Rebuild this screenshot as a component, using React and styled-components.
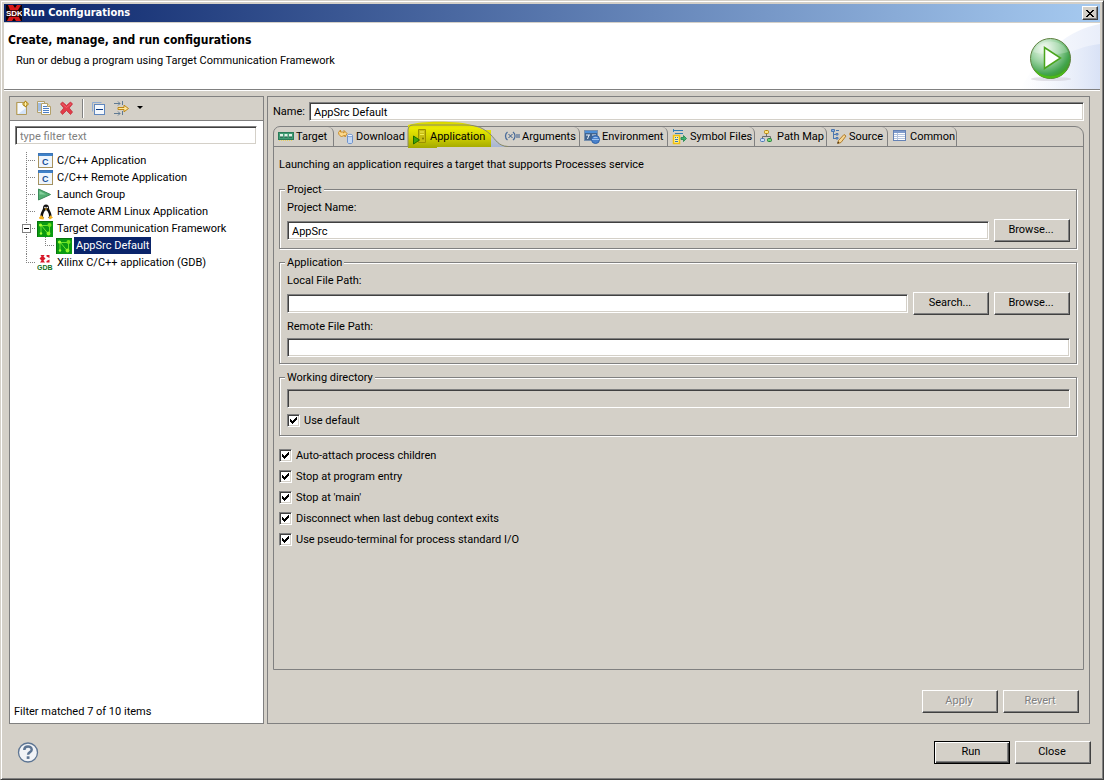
import React, { useState } from "react";
import styled, { createGlobalStyle, css } from "styled-components";

const face = "#d4d0c8";
const shadow = "#808080";
const dark = "#404040";
const headingFont = '"DejaVu Sans Condensed", Tahoma, sans-serif';

const GlobalStyle = createGlobalStyle`
  *, *::before, *::after { box-sizing: border-box; }
  body { margin: 0; background: ${face}; }
  body, button, input {
    font-family: Roboto, Tahoma, sans-serif;
    font-size: 11px;
    line-height: 14px;
    color: #000;
  }
`;

const Window = styled.div`
  display: flex;
  flex-direction: column;
  min-height: 100vh;
  padding: 3px 3px 2px 3px;
  background: ${face};
  border: 1px solid;
  border-color: ${face} ${dark} ${dark} ${face};
  box-shadow: inset 1px 1px 0 #fff, inset -1px -1px 0 ${shadow};
`;

const TitleBar = styled.div`
  display: flex;
  align-items: center;
  height: 18px;
  padding: 0 2px;
  background: linear-gradient(to right, #0a246a, #a6caf0);
`;

const WindowTitle = styled.h1`
  flex: 1;
  margin: 0 0 0 1px;
  font-family: ${headingFont};
  font-size: 11px;
  line-height: 14px;
  color: #fff;
`;

const CloseBox = styled.button`
  display: grid;
  place-items: center;
  width: 16px;
  height: 14px;
  padding: 0;
  background: ${face};
  border: 1px solid;
  border-color: #fff ${dark} ${dark} #fff;
  box-shadow: inset -1px -1px 0 ${shadow};
`;

const Banner = styled.header`
  display: flex;
  justify-content: space-between;
  margin-top: 1px;
  background: #fff;
  border-bottom: 1px solid ${shadow};
  box-shadow: 0 1px 0 #fff;
`;

const BannerText = styled.div`
  padding: 9px 4px 0;
`;

const BannerTitle = styled.h2`
  margin: 0;
  font-family: ${headingFont};
  font-size: 12px;
  line-height: 16px;
`;

const BannerMessage = styled.p`
  margin: 6px 8px 0;
`;

const Panes = styled.main`
  display: flex;
  flex: 1;
  gap: 3px;
  padding: 6px 10px 0 5px;
`;

const ConfigPane = styled.section`
  display: flex;
  flex-direction: column;
  flex: 0 0 255px;
  background: #fff;
  border: 1px solid ${shadow};
`;

const ToolBar = styled.div`
  display: flex;
  align-items: center;
  height: 24px;
  padding: 0 1px 1px;
  background: ${face};
  border-bottom: 1px solid ${shadow};
`;

const ToolButton = styled.button`
  display: grid;
  place-items: center;
  width: ${(p) => p.$width || 22}px;
  height: 22px;
  padding: 0;
  background: none;
  border: 0;
`;

const ToolSeparator = styled.span`
  width: 2px;
  height: 19px;
  margin: 0 4px 0 5px;
  background: linear-gradient(to right, ${shadow} 50%, #fff 50%);
`;

const TextField = styled.input`
  flex: 1;
  width: 100%;
  min-width: 0;
  height: 19px;
  padding: 1px 4px 0;
  background: #fff;
  border: 1px solid;
  border-color: ${shadow} #fff #fff ${shadow};
  border-radius: 0;
  box-shadow: inset 1px 1px 0 ${dark}, inset -1px -1px 0 ${face};
  outline: none;
  &:disabled { background: ${face}; }
  &::placeholder { color: ${shadow}; opacity: 1; }
`;

const FilterRow = styled.div`
  display: flex;
  padding: 5px 6px 5px 5px;
`;

const Tree = styled.ul`
  flex: 1;
  margin: 0;
  padding: 2px 0 0 7px;
  list-style: none;
`;

const TreeRow = styled.div`
  display: flex;
  align-items: center;
  height: 17px;
`;

const vertical = "repeating-linear-gradient(to bottom, #808080 0 1px, transparent 1px 2px)";
const horizontal = "repeating-linear-gradient(to right, #808080 0 1px, transparent 1px 2px)";

const Guide = styled.span`
  display: grid;
  place-items: center;
  width: 19px;
  height: 17px;
  background-repeat: no-repeat;
  ${(p) =>
    p.$kind === "line"
      ? css`
          background-image: ${vertical};
          background-size: 1px 17px;
          background-position: 9px 0;
        `
      : css`
          background-image: ${vertical}, ${horizontal};
          background-size: 1px ${p.$kind === "last" ? 9 : 17}px, 10px 1px;
          background-position: 9px 0, 9px 8px;
        `}
`;

const Expander = styled.button`
  width: 9px;
  height: 9px;
  padding: 0;
  border: 1px solid ${shadow};
  background: linear-gradient(#000, #000) center / 5px 1px no-repeat #fff;
`;

const TreeIcon = styled.span`
  display: flex;
  margin: 0 2px 0 1px;
`;

const TreeLabel = styled.span`
  padding: 2px 2px 1px;
  white-space: nowrap;
  ${(p) => p.$selected && "background: #0a246a; color: #fff;"}
`;

const FilterStatus = styled.p`
  margin: 0;
  padding: 0 4px 4px;
`;

const EditPane = styled.section`
  display: flex;
  flex-direction: column;
  flex: 1;
  min-width: 0;
  padding: 5px 5px 10px;
  border: 1px solid ${shadow};
`;

const NameRow = styled.div`
  display: flex;
  align-items: center;
  margin-bottom: 5px;
`;

const NameLabel = styled.label`
  flex: 0 0 36px;
`;

const TabFolder = styled.div`
  display: flex;
  flex-direction: column;
  flex: 1;
  border: 1px solid ${shadow};
  border-radius: 7px 9px 0 0;
`;

const TabBar = styled.div`
  display: flex;
  height: 20px;
  border-bottom: 1px solid ${shadow};
`;

const Tab = styled.button`
  position: relative;
  display: flex;
  align-items: center;
  gap: 2px;
  flex: 0 0 ${(p) => p.$width}px;
  height: 19px;
  padding: 1px 0 0 4px;
  white-space: nowrap;
  background: none;
  border: 0;
  border-right: 1px solid ${(p) => (p.$edge ? shadow : "transparent")};
  border-radius: 0 6px 0 0;
  & > svg, & > span { position: relative; flex: none; }
`;

const TabHighlight = styled.span`
  && {
    position: absolute;
    left: -1px;
    top: -6px;
    width: 104px;
    height: 28px;
  }
`;

const TabPage = styled.div`
  flex: 1;
  padding: 11px 6px 11px 5px;
`;

const Description = styled.p`
  margin: 0 0 11px;
`;

const Group = styled.fieldset`
  min-width: 0;
  margin: 0 0 7px;
  padding: 5px 6px 6px 7px;
  border: 1px solid ${shadow};
  box-shadow: 1px 1px 0 #fff, inset 1px 1px 0 #fff;
`;

const Legend = styled.legend`
  margin-left: -2px;
  padding: 0 2px;
  line-height: 13px;
  background: ${face};
`;

const FieldLabel = styled.label`
  display: block;
  margin-bottom: 4px;
`;

const FieldRow = styled.div`
  display: flex;
  align-items: center;
  gap: 5px;
  & + label { margin-top: 5px; }
`;

const PushButton = styled.button`
  flex: 0 0 76px;
  height: 23px;
  padding: 0 2px 1px 0;
  background: ${face};
  border: 1px solid;
  border-color: #fff ${dark} ${dark} #fff;
  border-radius: 0;
  box-shadow: inset -1px -1px 0 ${shadow};
  &:disabled { color: ${shadow}; text-shadow: 1px 1px 0 #fff; }
  ${(p) =>
    p.$primary &&
    css`
      border-color: #000;
      box-shadow: inset 1px 1px 0 #fff, inset -1px -1px 0 ${dark}, inset -2px -2px 0 ${shadow};
    `}
`;

const CheckLabel = styled.label`
  display: flex;
  align-items: flex-start;
  gap: 4px;
  height: 15px;
`;

const CheckInput = styled.input`
  appearance: none;
  display: grid;
  place-items: center;
  width: 13px;
  height: 13px;
  margin: 0;
  background: #fff;
  border: 1px solid;
  border-color: ${shadow} #fff #fff ${shadow};
  box-shadow: inset 1px 1px 0 ${dark}, inset -1px -1px 0 ${face};
  &:checked::before {
    content: "";
    width: 7px;
    height: 7px;
    background: #000;
    clip-path: polygon(0 2px, 1px 2px, 1px 3px, 2px 3px, 2px 4px, 3px 4px, 3px 3px, 4px 3px, 4px 2px, 5px 2px, 5px 1px, 6px 1px, 6px 0, 7px 0, 7px 3px, 6px 3px, 6px 4px, 5px 4px, 5px 5px, 4px 5px, 4px 6px, 3px 6px, 3px 7px, 2px 7px, 2px 6px, 1px 6px, 1px 5px, 0 5px);
  }
`;

const CheckList = styled.div`
  display: flex;
  flex-direction: column;
  gap: 6px;
  padding-top: 6px;
`;

const WorkingDirRow = styled(FieldRow)`
  margin-bottom: 6px;
`;

const PaneButtons = styled.div`
  display: flex;
  justify-content: flex-end;
  gap: 5px;
  margin: 20px 5px 0 0;
`;

const Footer = styled.footer`
  display: flex;
  align-items: center;
  gap: 5px;
  padding: 17px 9px 13px 13px;
`;

const HelpButton = styled.button`
  display: flex;
  margin-right: auto;
  padding: 0;
  background: none;
  border: 0;
`;

const Icon = ({ children, size = 16 }) => (
  <svg width={size} height={size} viewBox={`0 0 ${size} ${size}`} aria-hidden="true">
    {children}
  </svg>
);

const SdkIcon = () => (
  <Icon>
    <rect width="16" height="16" fill="#100404" />
    <path d="M2 0h5l2 3 2-3h4l-3 5v5l3 6h-5l-2-3-2 3H1l3-6V5z" fill="#d81818" />
    <rect y="5" width="16" height="7" fill="#200" opacity="0.75" />
    <text x="0" y="11" fontSize="8" fontWeight="700" fill="#fff" fontFamily="Liberation Sans, sans-serif">SDK</text>
  </Icon>
);

const NewIcon = () => (
  <Icon>
    <path d="M2.500 2.500h7v3h3v9h-10z" fill="#f4f8fe" stroke="#b09a5c" />
    <path d="M3 14V3" stroke="#c8b070" />
    <path d="M4 14h8V8z" fill="#d3e2f7" />
    <path d="M11.500 0.500l3.500 3.500-3.500 3.500L8 4z" fill="#b58a1c" />
    <path d="M11.500 2v4M9.500 4h4" stroke="#fff2a8" />
  </Icon>
);

const CopyIcon = () => (
  <Icon>
    <path d="M1.500 1.500h7v11h-7z" fill="#e8f0fb" stroke="#b3a06a" />
    <path d="M2 4h3M2 6h3M2 8h3M2 10h3" stroke="#5b8ac9" />
    <path d="M5.500 3.500h6l3 3v8h-9z" fill="#fbfdff" stroke="#b3a06a" />
    <path d="M11.500 3.500v3h3" fill="#f4e3a6" stroke="#b3a06a" />
    <path d="M7 6.500h4M7 8.500h6M7 10.500h6M7 12.500h6" stroke="#4c7fc4" />
  </Icon>
);

const DeleteIcon = () => (
  <Icon>
    <path d="M2.500 4l2-2 4 3.500L12.500 2l2 2-3.300 4 3.300 4-2 2.500-4-4-4 4L2.500 12l3.300-4z" fill="#e23b48" stroke="#c3303c" strokeWidth="0.800" />
    <path d="M4 3.800L8.500 7.500l4.500-3.700" fill="none" stroke="#f0646e" />
  </Icon>
);

const CollapseIcon = () => (
  <Icon>
    <path d="M1.500 11.500v-9h9" fill="none" stroke="#8eabd3" />
    <rect x="3.500" y="4.500" width="10" height="10" fill="#f4f8fd" stroke="#5f86bd" />
    <path d="M5 9.500h7" stroke="#0b3a86" />
  </Icon>
);

const FilterIcon = () => (
  <svg width="17" height="16" viewBox="0 0 17 16" aria-hidden="true">
    <path d="M1 3.500h6M1 13.500h6M5 1.500l2 2-2 2M5 11.500l2 2-2 2M9.500 1v4M9.500 11v4" fill="none" stroke="#5f7a93" />
    <path d="M5 7.500h6V5.200L15.500 8.500l-4.500 3.300V9.500H5z" fill="#ffe59a" stroke="#bd8716" />
  </svg>
);

const ArrowDownIcon = () => (
  <svg width="6" height="4" viewBox="0 0 6 4" aria-hidden="true">
    <path d="M0 0h6L3 3z" fill="#000" />
  </svg>
);

const CAppIcon = () => (
  <Icon>
    <rect x="1.500" y="0.500" width="14" height="14" fill="#eef5fd" stroke="#3d74b5" />
    <rect x="2" y="1" width="13" height="2" fill="#3f82c9" />
    <path d="M1.500 3v11.500h14V3" fill="none" stroke="#a9935c" />
    <text x="5" y="12" fontSize="9" fontWeight="700" fill="#174f96" fontFamily="Liberation Sans, sans-serif">C</text>
  </Icon>
);

const LaunchIcon = () => (
  <Icon>
    <path d="M1.500 2L13.500 7.500l-12 5.500z" fill="#54b073" stroke="#3c8a5a" />
    <path d="M2.500 4L9 7.500H2.500z" fill="#86cf9d" />
  </Icon>
);

const TuxIcon = () => (
  <Icon>
    <path d="M9 0.500c2 0 3 1.500 3 3.500 0 2 2.500 4 2.500 8l-1 2H5l-1.500-2C3.500 8 6 6 6 4c0-2 1-3.500 3-3.500z" fill="#111" />
    <path d="M9 6c2 1 3 4 3 6 0 1.500-1 2.500-3 2.500S6 13.500 6 12c0-2 1-5 3-6z" fill="#fff" />
    <circle cx="8" cy="3.500" r="0.800" fill="#fff" />
    <circle cx="10.200" cy="3.500" r="0.800" fill="#fff" />
    <path d="M7.500 4.500h3L9 6.200z" fill="#f2b01c" />
    <path d="M2 13.500l2.500-2.300L7 14l-.5 1.500L2.500 15zM11.500 14l1.800-2.800 2.700 2.300-3 2z" fill="#f2b01c" />
  </Icon>
);

const TcfIcon = () => (
  <Icon>
    <rect width="16" height="16" fill="#0a9a12" />
    <path d="M0 .5h16M.5 0v16" stroke="#06730c" />
    <path d="M3 4.500h9M4 4l7 8.500M12.500 4v9M4 4v8.500" fill="none" stroke="#6be32c" />
    <circle cx="3.500" cy="4" r="1.600" fill="#a5ff38" />
    <circle cx="12.500" cy="4" r="2" fill="#6fe21d" />
    <circle cx="4" cy="12.500" r="1.200" fill="#a5ff38" />
    <circle cx="11.500" cy="12.500" r="1.900" fill="#8ff52c" />
  </Icon>
);

const XilinxIcon = () => (
  <Icon>
    <path d="M3 -0.500h5l-1.500 2 2 2-2 2 1.500 2H3l1.500-2-2-2 2-2zM9.500 0h3v3l-3-1.500zM9.500 7.500h3v-3l-3 1.500z" fill="#d7182a" />
    <text x="0" y="15" fontSize="7" fontWeight="700" fill="#12701c" fontFamily="Liberation Sans, sans-serif">GDB</text>
  </Icon>
);

const TargetIcon = () => (
  <Icon>
    <rect x="0.500" y="3.500" width="15" height="7" fill="#3f9c74" stroke="#2b7a58" />
    <path d="M2 5h3v3H2zM6.500 5h3v3h-3zM11 5h3v3h-3z" fill="#dff3e8" />
    <path d="M2 8h3M6.500 8h3M11 8h3" stroke="#1c4f3c" />
    <path d="M1 11.500h14" stroke="#e8cf60" strokeDasharray="1 1" />
  </Icon>
);

const DownloadIcon = () => (
  <Icon>
    <path d="M0.500 3.500L2.500 1v2h2l1.500 1V1.500L9 4.500 7 8V6.500L4.500 7 3.500 8 1 5.500z" fill="#fbd88c" stroke="#c98a26" />
    <path d="M9.500 6.500c0-1.500 5-1.500 5 0v7c0 1.500-5 1.500-5 0z" fill="#c4d8f4" stroke="#6f93cc" />
    <ellipse cx="12" cy="6.500" rx="2.500" ry="1.200" fill="#eff5fd" stroke="#6f93cc" strokeWidth="0.800" />
  </Icon>
);

const ServerRunIcon = () => (
  <Icon>
    <path d="M6.500 0.500h7v13h-7z" fill="#c7bd12" stroke="#9a9000" />
    <path d="M8 3h4M8 5.500h4" stroke="#f2ee52" />
    <circle cx="11" cy="9.500" r="1" fill="#7f7600" />
    <path d="M1.500 7l6 4-6 4z" fill="#3fa40c" stroke="#1f6d00" />
  </Icon>
);

const ArgumentsIcon = () => (
  <Icon>
    <path d="M3.500 3C.8 5 .8 9 3.500 11M9 3c2.700 2 2.700 6 0 8" fill="none" stroke="#4a6c9b" strokeWidth="1.300" />
    <path d="M4.500 5l4 4M8.500 5l-4 4M12 6h4M12 8h4" fill="none" stroke="#34588c" />
  </Icon>
);

const EnvironmentIcon = () => (
  <Icon>
    <rect x="0.500" y="1.500" width="13" height="10" fill="#41648f" stroke="#7890ae" />
    <rect x="1" y="2" width="12" height="2" fill="#4d8fd8" />
    <path d="M2 6h4M3.500 10L5 6M8 6h4" stroke="#e9f1fb" />
    <circle cx="11.500" cy="10.500" r="4" fill="#4a82cc" stroke="#2f62a8" />
    <path d="M8 10.500h7M9.500 8.500h4" stroke="#9dc1ee" />
  </Icon>
);

const SymbolIcon = () => (
  <Icon>
    <path d="M1 1.500h10M3 4.500h8" stroke="#2f7db5" />
    <path d="M1.500 0v3" stroke="#2f7db5" />
    <rect x="1.500" y="6.500" width="6" height="8" fill="#fff3a0" stroke="#f0c010" strokeWidth="1.500" />
    <path d="M3 8.500h1M5 8.500h1M3 10.500h3M3 12.500h3" stroke="#3778b8" />
    <path d="M9 8.500h2.500v-2L14.500 9.500l-3 3v-2H9z" fill="#40b070" stroke="#1b8648" strokeWidth="0.800" />
  </Icon>
);

const PathMapIcon = () => (
  <Icon>
    <path d="M7.500 4v3M3.500 10V7.500h8V10" fill="none" stroke="#6d6d6d" />
    <rect x="5.500" y="1.500" width="4" height="3" rx="1" fill="#ffe680" stroke="#b8860b" />
    <rect x="1.500" y="9.500" width="4" height="3" rx="1" fill="#cfe0f8" stroke="#4a76b8" />
    <rect x="8.500" y="9.500" width="4" height="3" rx="1" fill="#74cf74" stroke="#24803a" />
  </Icon>
);

const SourceIcon = () => (
  <Icon>
    <path d="M2.500 2v8M3 5.500h2M3 9.500h2M5 1.500h3" fill="none" stroke="#4c77b0" />
    <path d="M.5 .5h3v2h-3zM5 4.500h2V6H5zM5 8.500h2V10H5z" fill="#8fb1e0" stroke="#4c77b0" />
    <path d="M7.500 11.500l5.500-6 2 1.500-5 6.500-3 1z" fill="#f6d592" stroke="#b07c2c" />
    <path d="M6 14.800l.8-2.300 1.700 1.300z" fill="#4a3210" />
  </Icon>
);

const CommonIcon = () => (
  <Icon>
    <rect x="1.500" y="1.500" width="12" height="10" fill="#fff" stroke="#6582b5" />
    <rect x="2" y="2" width="11" height="2" fill="#7f9bcb" />
    <path d="M2 5.500h11M2 7.500h11M2 9.500h11M5.500 4v7" stroke="#b4c4de" />
  </Icon>
);

const BannerArt = () => (
  <svg width="140" height="66" viewBox="0 0 140 66" aria-hidden="true">
    <defs>
      <linearGradient id="skyOuter" x1="0" x2="1">
        <stop offset="0" stopColor="#fff" />
        <stop offset="1" stopColor="#e9eefa" />
      </linearGradient>
      <linearGradient id="skyInner" x1="0" x2="1">
        <stop offset="0" stopColor="#fff" stopOpacity="0" />
        <stop offset="1" stopColor="#d9e2f6" />
      </linearGradient>
      <radialGradient id="ball" cx="0.350" cy="0.250" r="0.800">
        <stop offset="0" stopColor="#f4fbf2" />
        <stop offset="0.450" stopColor="#9bd3a2" />
        <stop offset="0.800" stopColor="#43a44f" />
        <stop offset="1" stopColor="#3d9c17" />
      </radialGradient>
    </defs>
    <path d="M60 66C80 30 110 6 140 1v65z" fill="url(#skyOuter)" />
    <path d="M60 66C85 40 112 24 140 21v45z" fill="url(#skyInner)" />
    <ellipse cx="91" cy="56" rx="20" ry="2" fill="#c9c6cf" opacity="0.500" />
    <circle cx="90.500" cy="35.500" r="20" fill="url(#ball)" stroke="#5f8040" />
    <path d="M74 45c8 11 25 11 33 0-4 14-29 14-33 0z" fill="#4cba18" />
    <path d="M73 29c6-14 29-14 35 0-9 3-26 3-35 0z" fill="#fff" opacity="0.220" />
    <path d="M84.500 24.500v21l16-10.500z" fill="#fff" stroke="#4aa51c" strokeWidth="1.500" />
  </svg>
);

const HelpIcon = () => (
  <svg width="22" height="22" viewBox="0 0 22 22" aria-hidden="true">
    <circle cx="11" cy="10.500" r="9.500" fill="#f1f3f6" stroke="#5d7593" strokeWidth="1.300" />
    <path d="M7.300 8c0-4.500 7.400-4.500 7.400-.3 0 2.600-3.600 2.300-3.600 5" fill="none" stroke="#5d7593" strokeWidth="2.500" />
    <rect x="9.700" y="14.300" width="2.800" height="2.600" fill="#5d7593" />
  </svg>
);

const HighlightArt = () => (
  <svg width="104" height="28" viewBox="0 0 104 28" aria-hidden="true">
    <defs>
      <linearGradient id="marker" x1="0" x2="0" y1="0" y2="1">
        <stop offset="0" stopColor="#d6d400" />
        <stop offset="0.250" stopColor="#eaea00" />
        <stop offset="0.600" stopColor="#cfd000" />
        <stop offset="1" stopColor="#a3a800" />
      </linearGradient>
      <linearGradient id="tabBlue" x1="0" x2="0" y1="0" y2="1">
        <stop offset="0" stopColor="#d4d0c8" />
        <stop offset="1" stopColor="#a5b4d4" />
      </linearGradient>
    </defs>
    <path d="M84 12c7 8 8 13 17 14H84z" fill="url(#tabBlue)" />
    <path d="M1 4C10 1 28 0 42 1c14 0 23 3 28 5l7 3h7v17H30v1H1z" fill="url(#marker)" />
    <path d="M1 26V9c0-3 2-5 5-5h52c12 0 18 3 25 9 6 6 8 12 18 12.500" fill="none" stroke="#8a8a66" />
  </svg>
);

const tabs = [
  { name: "Target", width: 60, icon: TargetIcon, edge: true },
  { name: "Download", width: 74, icon: DownloadIcon },
  { name: "Application", width: 92, icon: ServerRunIcon },
  { name: "Arguments", width: 80, icon: ArgumentsIcon, edge: true },
  { name: "Environment", width: 88, icon: EnvironmentIcon, edge: true },
  { name: "Symbol Files", width: 87, icon: SymbolIcon, edge: true },
  { name: "Path Map", width: 72, icon: PathMapIcon, edge: true },
  { name: "Source", width: 61, icon: SourceIcon, edge: true },
  { name: "Common", width: 69, icon: CommonIcon, edge: true },
];

const configs = [
  { name: "C/C++ Application", icon: CAppIcon, guides: ["branch"] },
  { name: "C/C++ Remote Application", icon: CAppIcon, guides: ["branch"] },
  { name: "Launch Group", icon: LaunchIcon, guides: ["branch"] },
  { name: "Remote ARM Linux Application", icon: TuxIcon, guides: ["branch"] },
  { name: "Target Communication Framework", icon: TcfIcon, guides: ["branch"], expandable: true },
  { name: "AppSrc Default", icon: TcfIcon, guides: ["line", "last"], selected: true },
  { name: "Xilinx C/C++ application (GDB)", icon: XilinxIcon, guides: ["last"] },
];

const options = [
  "Auto-attach process children",
  "Stop at program entry",
  "Stop at 'main'",
  "Disconnect when last debug context exits",
  "Use pseudo-terminal for process standard I/O",
];

const Check = ({ children }) => (
  <CheckLabel>
    <CheckInput type="checkbox" defaultChecked />
    {children}
  </CheckLabel>
);

export default function App() {
  const [active, setActive] = useState("Application");

  return (
    <>
      <GlobalStyle />
      <Window>
        <TitleBar>
          <SdkIcon />
          <WindowTitle>Run Configurations</WindowTitle>
          <CloseBox aria-label="Close window">
            <svg width="8" height="7" viewBox="0 0 8 7" shapeRendering="crispEdges" aria-hidden="true">
              <path d="M0 0h2v1h1v1h2V1h1V0h2v1H7v1H6v1H5v1h1v1h1v1h1v1H6V6H5V5H3v1H2v1H0V6h1V5h1V4h1V3H2V2H1V1H0z" fill="#000" />
            </svg>
          </CloseBox>
        </TitleBar>

        <Banner>
          <BannerText>
            <BannerTitle>Create, manage, and run configurations</BannerTitle>
            <BannerMessage>Run or debug a program using Target Communication Framework</BannerMessage>
          </BannerText>
          <BannerArt />
        </Banner>

        <Panes>
          <ConfigPane>
            <ToolBar>
              <ToolButton aria-label="New"><NewIcon /></ToolButton>
              <ToolButton aria-label="Duplicate"><CopyIcon /></ToolButton>
              <ToolButton aria-label="Delete"><DeleteIcon /></ToolButton>
              <ToolSeparator />
              <ToolButton aria-label="Collapse all"><CollapseIcon /></ToolButton>
              <ToolButton aria-label="Filter"><FilterIcon /></ToolButton>
              <ToolButton aria-label="Filter menu" $width={16}><ArrowDownIcon /></ToolButton>
            </ToolBar>
            <FilterRow>
              <TextField aria-label="Filter" placeholder="type filter text" />
            </FilterRow>
            <Tree>
              {configs.map(({ name, icon: Glyph, guides, expandable, selected }) => (
                <li key={name}>
                  <TreeRow>
                    {guides.map((kind) => (
                      <Guide key={kind} $kind={kind}>
                        {expandable && <Expander aria-label="Collapse" />}
                      </Guide>
                    ))}
                    <TreeIcon><Glyph /></TreeIcon>
                    <TreeLabel $selected={selected}>{name}</TreeLabel>
                  </TreeRow>
                </li>
              ))}
            </Tree>
            <FilterStatus>Filter matched 7 of 10 items</FilterStatus>
          </ConfigPane>

          <EditPane>
            <NameRow>
              <NameLabel htmlFor="name">Name:</NameLabel>
              <TextField id="name" defaultValue="AppSrc Default" />
            </NameRow>
            <TabFolder>
              <TabBar role="tablist">
                {tabs.map(({ name, width, icon: Glyph, edge }) => (
                  <Tab
                    key={name}
                    role="tab"
                    aria-selected={active === name}
                    onClick={() => setActive(name)}
                    $width={width}
                    $edge={edge}
                  >
                    {active === name && <TabHighlight><HighlightArt /></TabHighlight>}
                    <Glyph />
                    <span>{name}</span>
                  </Tab>
                ))}
              </TabBar>
              <TabPage>
                <Description>Launching an application requires a target that supports Processes service</Description>
                <Group>
                  <Legend>Project</Legend>
                  <FieldLabel htmlFor="project">Project Name:</FieldLabel>
                  <FieldRow>
                    <TextField id="project" defaultValue="AppSrc" />
                    <PushButton>Browse...</PushButton>
                  </FieldRow>
                </Group>
                <Group>
                  <Legend>Application</Legend>
                  <FieldLabel htmlFor="local">Local File Path:</FieldLabel>
                  <FieldRow>
                    <TextField id="local" />
                    <PushButton>Search...</PushButton>
                    <PushButton>Browse...</PushButton>
                  </FieldRow>
                  <FieldLabel htmlFor="remote">Remote File Path:</FieldLabel>
                  <FieldRow>
                    <TextField id="remote" />
                  </FieldRow>
                </Group>
                <Group>
                  <Legend>Working directory</Legend>
                  <WorkingDirRow>
                    <TextField aria-label="Working directory" disabled />
                  </WorkingDirRow>
                  <Check>Use default</Check>
                </Group>
                <CheckList>
                  {options.map((option) => (
                    <Check key={option}>{option}</Check>
                  ))}
                </CheckList>
              </TabPage>
            </TabFolder>
            <PaneButtons>
              <PushButton disabled>Apply</PushButton>
              <PushButton disabled>Revert</PushButton>
            </PaneButtons>
          </EditPane>
        </Panes>

        <Footer>
          <HelpButton aria-label="Help"><HelpIcon /></HelpButton>
          <PushButton $primary>Run</PushButton>
          <PushButton>Close</PushButton>
        </Footer>
      </Window>
    </>
  );
}
